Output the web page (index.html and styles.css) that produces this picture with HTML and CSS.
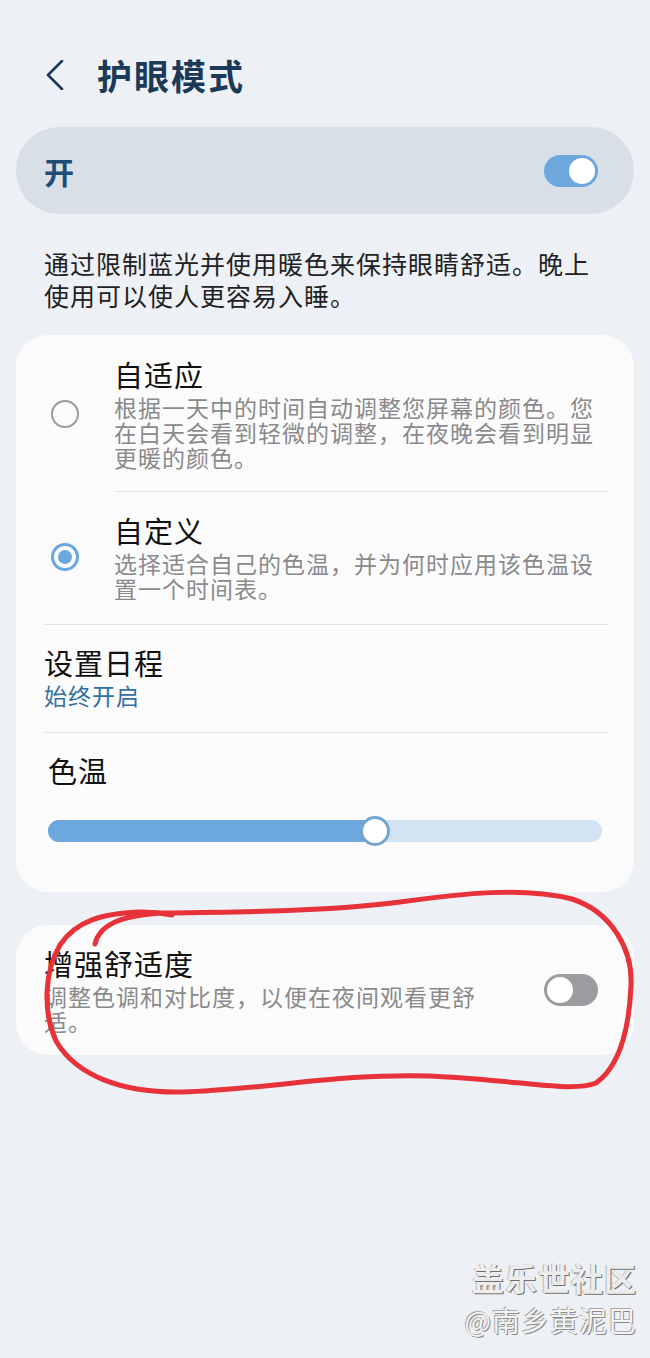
FILE: index.html
```html
<!DOCTYPE html>
<html lang="zh-CN">
<head>
  <meta charset="UTF-8">
  <title>护眼模式</title>
  <meta name="viewport" content="width=device-width, initial-scale=1">
  <link rel="stylesheet" href="styles.css">
</head>
<body>

  <!-- 顶部标题 -->
  <div class="header">
    <svg class="back" width="20" height="30" viewBox="0 0 20 30">
      <path d="M17 1 L3 15 L17 29" fill="none" stroke="#1c3854" stroke-width="2.6" stroke-linecap="round" stroke-linejoin="round"/>
    </svg>
    <div class="page-title">护眼模式</div>
  </div>

  <!-- 总开关 -->
  <div class="master">
    <div class="master-label">开</div>
    <div class="switch on"><span class="knob"></span></div>
  </div>

  <div class="desc">通过限制蓝光并使用暖色来保持眼睛舒适。晚上使用可以使人更容易入睡。</div>

  <!-- 模式选择 -->
  <div class="card">
    <div class="option first">
      <div class="radio-col"><span class="radio"></span></div>
      <div class="text">
        <div class="item-title">自适应</div>
        <div class="item-sub">根据一天中的时间自动调整您屏幕的颜色。您在白天会看到轻微的调整，在夜晚会看到明显更暖的颜色。</div>
      </div>
    </div>
    <div class="divider inset"></div>
    <div class="option second">
      <div class="radio-col"><span class="radio checked"></span></div>
      <div class="text">
        <div class="item-title">自定义</div>
        <div class="item-sub">选择适合自己的色温，并为何时应用该色温设置一个时间表。</div>
      </div>
    </div>
    <div class="divider"></div>
    <div class="row schedule">
      <div class="item-title">设置日程</div>
      <div class="item-sub blue">始终开启</div>
    </div>
    <div class="divider"></div>
    <div class="row temp">
      <div class="item-title">色温</div>
      <div class="slider">
        <div class="slider-fill" style="width: 59%"></div>
        <span class="slider-knob" style="left: 59%"></span>
      </div>
    </div>
  </div>

  <!-- 增强舒适度 -->
  <div class="card comfort">
    <div class="text">
      <div class="item-title">增强舒适度</div>
      <div class="item-sub">调整色调和对比度，以便在夜间观看更舒适。</div>
    </div>
    <div class="switch off"><span class="knob"></span></div>
  </div>

  <!-- 红色圈注 -->
  <svg class="scribble" width="650" height="1358" viewBox="0 0 650 1358">
    <path d="M95 944 C99 926 118 916 160 913 C250 912 330 911 400 902 C460 894 522 886 572 899 C612 912 633 950 631 986 C629 1030 620 1066 596 1083 C570 1093 520 1080 430 1076 C340 1073 262 1090 182 1092 C120 1093 76 1075 56 1041 C42 1010 45 970 60 945 C76 921 102 913 142 912 C152 912 162 913 172 915" fill="none" stroke="#e8323a" stroke-width="5" stroke-linecap="round" stroke-linejoin="round"/>
  </svg>

  <!-- 水印 -->
  <div class="watermark">
    <div class="wm-1">盖乐世社区</div>
    <div class="wm-2">@南乡黄泥巴</div>
  </div>

</body>
</html>
```

FILE: styles.css
```css
/* 全体 */
body {
  margin: 0;
  padding: 0;
  width: 650px;
  min-height: 1358px;
  position: relative;
  background: #edf0f4;
  font-family: "Noto Sans CJK SC", "Noto Sans", sans-serif;
  color: #111;
  overflow: hidden;
}

/* 顶部标题 */
.header {
  display: flex;
  align-items: center;
  height: 50px;
  padding: 50px 0 27px 45px;
}

.back {
  display: block;
}

.page-title {
  margin-left: 32px;
  font-size: 35px;
  font-weight: 700;
  letter-spacing: 2px;
  color: #1b3a58;
  line-height: 50px;
}

/* 总开关 */
.master {
  display: flex;
  align-items: center;
  justify-content: space-between;
  height: 87px;
  margin: 0 16px;
  padding: 0 36px 0 28px;
  border-radius: 44px;
  background: #d9dfe7;
}

.master-label {
  font-size: 30px;
  font-weight: 700;
  color: #1f4c74;
}

/* スイッチ */
.switch {
  position: relative;
  width: 54px;
  height: 32px;
  border-radius: 16px;
  flex-shrink: 0;
}

.switch .knob {
  position: absolute;
  top: 3px;
  width: 26px;
  height: 26px;
  border-radius: 50%;
  background: #fff;
}

.switch.on {
  background: #6ca7de;
}

.switch.on .knob {
  right: 3px;
}

.switch.off {
  background: #9c9ca0;
}

.switch.off .knob {
  left: 3px;
}

/* 说明 */
.desc {
  margin: 33px 0 24px;
  padding: 0 44px;
  font-size: 25px;
  letter-spacing: 1px;
  line-height: 32px;
  color: #222;
}

/* カード */
.card {
  margin: 0 16px;
  border-radius: 32px;
  background: #fbfbfc;
}

.item-title {
  font-size: 29px;
  letter-spacing: 1px;
  line-height: 34px;
  color: #111;
}

.item-sub {
  margin-top: 4px;
  font-size: 23px;
  letter-spacing: 1px;
  line-height: 25px;
  color: #8a8a8c;
}

.item-sub.blue {
  color: #33709f;
}

.option {
  display: flex;
  align-items: center;
  padding-right: 25px;
}

.option.first {
  padding-top: 22px;
  padding-bottom: 21px;
}

.option.second {
  padding-top: 21px;
  padding-bottom: 23px;
}

.radio-col {
  width: 98px;
  display: flex;
  justify-content: center;
  flex-shrink: 0;
}

.radio {
  width: 28px;
  height: 28px;
  box-sizing: border-box;
  border-radius: 50%;
  border: 2px solid #9b9b9d;
  position: relative;
}

.radio.checked {
  border: 3px solid #6ca7de;
}

.radio.checked::after {
  content: "";
  position: absolute;
  top: 4px;
  left: 4px;
  width: 14px;
  height: 14px;
  border-radius: 50%;
  background: #6ca7de;
}

.text {
  flex: 1;
}

.divider {
  height: 1px;
  margin: 0 25px 0 28px;
  background: #e1e3e6;
}

.divider.inset {
  margin-left: 98px;
}

.row {
  padding: 0 28px;
}

.schedule {
  padding-top: 20px;
  padding-bottom: 24px;
}

.temp {
  padding: 20px 32px 50px;
}

/* 色温スライダー */
.slider {
  position: relative;
  height: 22px;
  margin-top: 33px;
  border-radius: 11px;
  background: #d3e3f3;
}

.slider-fill {
  height: 100%;
  border-radius: 11px;
  background: #6ca7de;
}

.slider-knob {
  position: absolute;
  top: -4px;
  width: 30px;
  height: 30px;
  box-sizing: border-box;
  margin-left: -15px;
  border-radius: 50%;
  border: 3px solid #74a6cc;
  background: #fff;
}

/* 增强舒适度 */
.card.comfort {
  display: flex;
  align-items: center;
  gap: 55px;
  margin-top: 33px;
  padding: 21px 36px 21px 28px;
}

/* 圈注 */
.scribble {
  position: absolute;
  top: 0;
  left: 0;
  pointer-events: none;
}

/* 水印 */
.watermark {
  position: absolute;
  right: 13px;
  top: 1256px;
  text-align: right;
  color: #ececec;
}

.wm-1 {
  font-size: 32px;
  font-weight: 700;
  line-height: 42px;
  letter-spacing: 1px;
  text-shadow: 1px 1px 0 #6e6e6e, -1px 0 0 #bbb;
}

.wm-2 {
  margin-top: 4px;
  font-size: 28px;
  line-height: 36px;
  letter-spacing: 1px;
  color: #f4f4f4;
  text-shadow: 1px 1px 0 #8a8a8a, -1px -1px 0 #aaa;
}
```
